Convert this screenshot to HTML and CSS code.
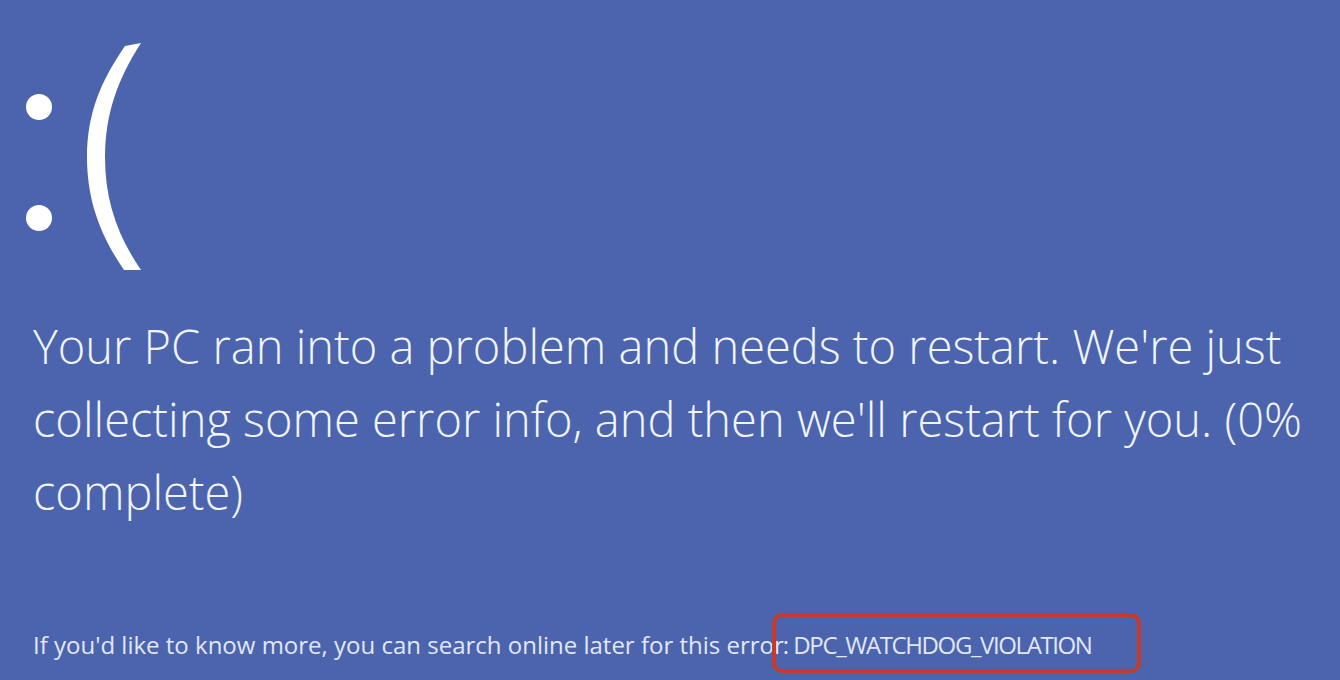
FILE: index.html
```html
<!DOCTYPE html>
<html lang="en">
<head>
<meta charset="utf-8">
<title>Your PC ran into a problem</title>
<link rel="stylesheet" href="styles.css">
</head>
<body>
<main class="screen">
  <svg class="face" width="160" height="290" viewBox="0 0 160 290" aria-label=":(">
    <circle cx="39" cy="107" r="13" fill="#ffffff"/>
    <circle cx="39" cy="218" r="13" fill="#ffffff"/>
    <path d="M125,46 L141,43 C117,80 105,115 105,157 C105,200 117,235 141,270 L124,270 C100,235 87,200 87,157 C87,115 100,82 125,46 Z" fill="#ffffff"/>
  </svg>
  <p class="message">Your PC ran into a problem and needs to restart. We're just collecting some error info, and then we'll restart for you. (0% complete)</p>
  <p class="more">If you'd like to know more, you can search online later for this erro<span class="code">r: <span class="code-name">DPC_WATCHDOG_VIOLATION</span></span></p>
</main>
</body>
</html>
```
FILE: styles.css
```css
html, body {
  margin: 0;
  padding: 0;
  background: #4b64ad;
}
.screen {
  width: 1340px;
  height: 680px;
  overflow: hidden;
  background: #4b64ad;
  color: #f2f4fb;
  font-family: "Open Sans", "Noto Sans", sans-serif;
}
.face {
  display: block;
}
.message {
  margin: 20px 0 0 33px;
  width: 1300px;
  font-size: 47px;
  font-weight: 350;
  line-height: 73px;
}
.more {
  margin: 100px 0 0 33px;
  font-size: 24px;
  font-weight: 400;
  line-height: 32px;
  color: #e1e7f5;
  white-space: nowrap;
}
.code {
  position: relative;
  letter-spacing: -1px;
}
.code-name {
  letter-spacing: -1.4px;
}
.code::after {
  content: "";
  position: absolute;
  left: -2px;
  top: -15px;
  width: 361px;
  height: 52px;
  border: 4px solid #c63a2b;
  border-radius: 10px;
}
```
